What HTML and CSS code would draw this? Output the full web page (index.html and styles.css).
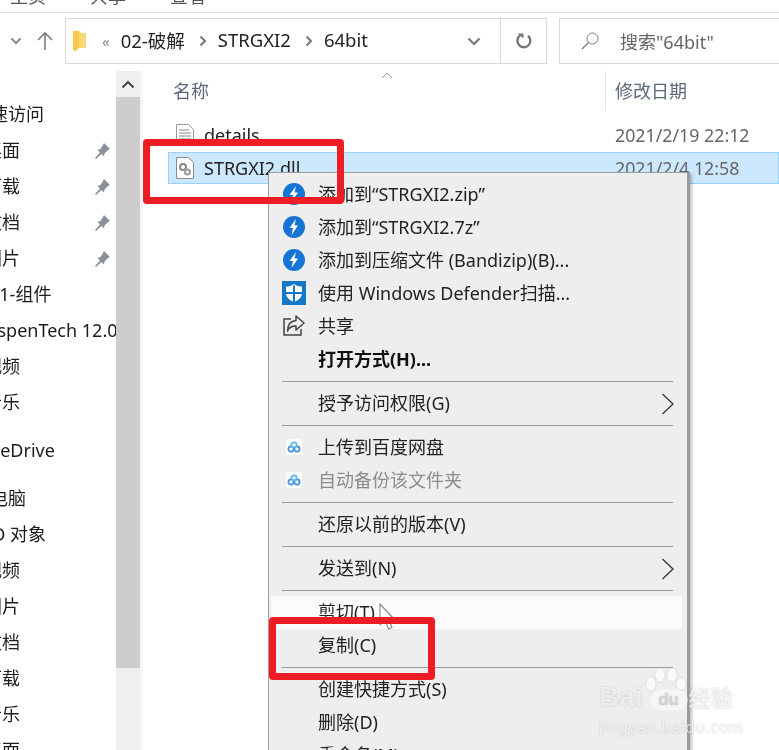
FILE: index.html
```html
<!DOCTYPE html>
<html lang="zh-CN">
<head>
<meta charset="utf-8">
<title>64bit</title>
<link rel="stylesheet" href="styles.css">
</head>
<body>
<div class="window">
  <div class="ribbon"><span>主页</span><span>共享</span><span>查看</span></div>
  <div class="toolbar">
    <svg class="nav-down" width="12" height="8" viewBox="0 0 12 8"><path d="M1.5 1.5 6 6l4.500-4.500" fill="none" stroke="#8a8a8a" stroke-width="2"/></svg>
    <svg class="nav-up" width="18" height="20" viewBox="0 0 18 20"><path d="M9 19V2M2 9l7-7 7 7" fill="none" stroke="#7f7f7f" stroke-width="1.600"/></svg>
    <div class="address">
      <svg class="folder" width="16" height="22" viewBox="0 0 16 22"><path d="M1 1h7l1 2h5v15H6l-2 3-3-1z" fill="#f8d775"/><path d="M1 1h6v17l-3 3-3-1z" fill="#f5c94f"/></svg>
      <span class="crumb-more">«</span>
      <span class="crumb">02-破解</span>
      <svg class="sep" width="8" height="12" viewBox="0 0 8 12"><path d="M1.500 1.500 6 6l-4.500 4.500" fill="none" stroke="#777" stroke-width="2"/></svg>
      <span class="crumb">STRGXI2</span>
      <svg class="sep" width="8" height="12" viewBox="0 0 8 12"><path d="M1.500 1.500 6 6l-4.500 4.500" fill="none" stroke="#777" stroke-width="2"/></svg>
      <span class="crumb">64bit</span>
      <svg class="addr-down" width="14" height="9" viewBox="0 0 14 9"><path d="M1.500 1.500 7 7l5.500-5.500" fill="none" stroke="#777" stroke-width="2.200"/></svg>
      <div class="refresh">
        <svg width="18" height="18" viewBox="0 0 18 18"><path d="M5 3.500a6.500 6.500 0 1 0 8 .2" fill="none" stroke="#777" stroke-width="2.400"/><path d="M2.500 1.500h6v5z" fill="#777"/></svg>
      </div>
    </div>
    <div class="search">
      <svg width="20" height="20" viewBox="0 0 20 20"><circle cx="12.500" cy="7.500" r="5.500" fill="none" stroke="#777" stroke-width="1"/><path d="M8.500 11.500 2 18" stroke="#777" stroke-width="1.300"/></svg>
      <span>搜索"64bit"</span>
    </div>
  </div>
  <div class="content">
    <nav class="tree">
      <div class="tree-row head">快速访问</div>
      <div class="tree-row child">桌面<svg class="pin"><use href="#pin"/></svg></div>
      <div class="tree-row child">下载<svg class="pin"><use href="#pin"/></svg></div>
      <div class="tree-row child">文档<svg class="pin"><use href="#pin"/></svg></div>
      <div class="tree-row child">图片<svg class="pin"><use href="#pin"/></svg></div>
      <div class="tree-row wide">01-组件</div>
      <div class="tree-row wide2">AspenTech 12.0</div>
      <div class="tree-row child">视频</div>
      <div class="tree-row child gap">音乐</div>
      <div class="tree-row onedrive gap">OneDrive</div>
      <div class="tree-row head">此电脑</div>
      <div class="tree-row wide3">3D 对象</div>
      <div class="tree-row child">视频</div>
      <div class="tree-row child">图片</div>
      <div class="tree-row child">文档</div>
      <div class="tree-row child">下载</div>
      <div class="tree-row child">音乐</div>
      <div class="tree-row child">桌面</div>
    </nav>
    <div class="scrollbar">
      <div class="scroll-btn"><svg width="14" height="9" viewBox="0 0 14 9"><path d="M1.500 7.500 7 2l5.500 5.500" fill="none" stroke="#4a4a4a" stroke-width="2.200"/></svg></div>
      <div class="scroll-thumb"></div>
    </div>
    <main class="files">
      <div class="columns">
        <svg class="sort" width="12" height="7" viewBox="0 0 12 7"><path d="M1 6l5-5 5 5" fill="none" stroke="#999" stroke-width="1"/></svg>
        <div class="col-name">名称</div>
        <div class="col-date">修改日期</div>
      </div>
      <div class="file">
        <svg class="file-icon" width="18" height="22" viewBox="0 0 18 22"><path d="M.5.500h12l5 5v16H.500z" fill="#fff" stroke="#9a9a9a"/><path d="M3 6h10M3 9h12M3 12h12M3 15h12M3 18h12" stroke="#888"/></svg>
        <span class="file-name">details</span>
        <span class="file-date">2021/2/19 22:12</span>
      </div>
      <div class="file selected">
        <svg class="file-icon" width="18" height="22" viewBox="0 0 18 22"><path d="M.5.500h12l5 5v16H.500z" fill="#fff" stroke="#8a8a8a"/><circle cx="7" cy="10" r="3" fill="none" stroke="#888" stroke-width="2"/><circle cx="11.500" cy="15" r="2.500" fill="none" stroke="#999" stroke-width="2"/></svg>
        <span class="file-name">STRGXI2.dll</span>
        <span class="file-date">2021/2/4 12:58</span>
      </div>
    </main>
  </div>

  <div class="menu">
    <div class="item"><svg class="ic"><use href="#bz"/></svg>添加到“STRGXI2.zip”</div>
    <div class="item"><svg class="ic"><use href="#bz"/></svg>添加到“STRGXI2.7z”</div>
    <div class="item"><svg class="ic"><use href="#bz"/></svg>添加到压缩文件 (Bandizip)(B)...</div>
    <div class="item"><svg class="ic" viewBox="0 0 24 24"><rect width="24" height="24" fill="#1477c9"/><path d="M12 3c3 2 5 2.500 8 2.500V12c0 4.500-3.500 7-8 9-4.500-2-8-4.500-8-9V5.500C7 5.500 9 5 12 3z" fill="#fff"/><path d="M11 4.500h2V11h7v2h-7v8h-2v-8H4v-2h7z" fill="#1477c9"/></svg>使用 Windows Defender扫描...</div>
    <div class="item"><svg class="ic" viewBox="0 0 24 24"><path d="M9 5H2v16h17v-6" fill="none" stroke="#444" stroke-width="1.500"/><path d="M14 2l8 7-8 7v-4C10 12 7 13 5.500 17c0-6 3-10 8.500-10.500z" fill="#eee" stroke="#444" stroke-width="1.500" stroke-linejoin="round"/></svg>共享</div>
    <div class="item strong">打开方式(H)...</div>
    <div class="rule"></div>
    <div class="item">授予访问权限(G)<svg class="more"><use href="#more"/></svg></div>
    <div class="rule"></div>
    <div class="item"><svg class="ic-sm"><use href="#cloud"/></svg>上传到百度网盘</div>
    <div class="item disabled"><svg class="ic-sm"><use href="#cloud"/></svg>自动备份该文件夹</div>
    <div class="rule"></div>
    <div class="item no-ic">还原以前的版本(V)</div>
    <div class="rule"></div>
    <div class="item">发送到(N)<svg class="more"><use href="#more"/></svg></div>
    <div class="rule"></div>
    <div class="item lit">剪切(T)</div>
    <div class="item">复制(C)</div>
    <div class="rule"></div>
    <div class="item">创建快捷方式(S)</div>
    <div class="item">删除(D)</div>
    <div class="item">重命名(M)</div>
  </div>

  <svg class="cursor" width="16" height="28" viewBox="0 0 16 28"><path d="M1 1v21l5-5 3.500 9 3.500-1.500L9.500 16H15z" fill="none" stroke="#8a8a8a" stroke-width="1.100" stroke-linejoin="round"/></svg>
  <div class="mark mark-a"></div>
  <div class="mark mark-b"></div>

  <div class="baidu">
    <svg class="bd-paw" width="44" height="34" viewBox="0 0 44 34"><g fill="#fff" fill-opacity=".7" stroke="#000" stroke-opacity=".08"><ellipse cx="7" cy="16" rx="5" ry="7"/><ellipse cx="16" cy="7" rx="5" ry="7"/><ellipse cx="28" cy="7" rx="5" ry="7"/><ellipse cx="37" cy="16" rx="5" ry="6"/></g></svg>
    <div class="bd-row"><span class="bd-bai">Bai</span><span class="bd-du">du</span><span class="bd-cn">经验</span></div>
    <div class="bd-url">jingyan.baidu.com</div>
  </div>
</div>

<svg class="defs" width="0" height="0">
  <defs>
    <symbol id="pin" viewBox="0 0 16 16"><path d="M10 0l6 6-2 1-3.500 3.500-.5 3L7.500 11 2 16l-1-1 5-5.500L3.500 7l3-1L9 2z" fill="#8a9097"/></symbol>
    <symbol id="bz" viewBox="0 0 24 24"><circle cx="12" cy="12" r="11" fill="#1574d4"/><path d="M14 4l-6.500 9H11l-1.500 7 6.500-9.500h-3.500z" fill="#fff"/></symbol>
    <symbol id="cloud" viewBox="0 0 24 24"><rect width="24" height="24" rx="4" fill="#fbfbfb"/><g fill="none" stroke-width="2.400"><circle cx="7.500" cy="15" r="4" stroke="#3a8de0"/><circle cx="16.500" cy="15" r="4" stroke="#3a8de0"/><circle cx="12" cy="9" r="4" stroke="#5cb8ea"/></g></symbol>
    <symbol id="more" viewBox="0 0 14 22"><path d="M1.500 1 12 11 1.500 21" fill="none" stroke="#333" stroke-width="1.300"/></symbol>
  </defs>
</svg>
</body>
</html>
```

FILE: styles.css
```css
* { box-sizing: border-box; }
html, body { margin: 0; padding: 0; height: 100%; overflow: hidden; background: #fff; }
body { font-family: "Noto Sans", "Noto Sans CJK SC", sans-serif; font-size: 18px; color: #1c1c1c; }
.defs { position: absolute; }
.window { position: relative; width: 779px; height: 750px; overflow: hidden; display: flex; flex-direction: column; filter: blur(.4px); }

.ribbon { height: 13px; flex: none; overflow: hidden; border-bottom: 1px solid #dedede; display: flex; gap: 44px; padding-left: 10px; line-height: 18px; color: #555; }
.ribbon span { margin-top: -13px; width: 36px; }

.toolbar { height: 58px; flex: none; display: flex; align-items: flex-start; padding-top: 5px; position: relative; }
.nav-down { margin: 19px 0 0 10px; flex: none; }
.nav-up { margin: 13px 0 0 14px; flex: none; }
.address { margin-left: 11px; width: 482px; height: 46px; border: 1px solid #d9d9d9; display: flex; align-items: center; flex: none; }
.folder { margin-left: 6px; flex: none; }
.crumb-more { margin-left: 14px; color: #888; font-size: 15px; }
.crumb { font-size: 18.500px; color: #222; margin-left: 11px; white-space: nowrap; padding-bottom: 3px; }
.sep { margin-left: 14px; flex: none; }
.addr-down { margin-left: auto; margin-right: 19px; flex: none; }
.refresh { width: 46px; height: 100%; border-left: 1px solid #d9d9d9; display: flex; align-items: center; justify-content: center; flex: none; }
.search { margin-left: 12px; flex: 1; height: 46px; border: 1px solid #d9d9d9; border-right: 0; display: flex; align-items: center; padding-left: 20px; gap: 20px; color: #666; }

.content { flex: 1; display: flex; min-height: 0; }
.tree { width: 116px; flex: none; overflow: hidden; padding-top: 25px; }
.tree-row { height: 36px; line-height: 36px; white-space: nowrap; position: relative; }
.tree-row.head { margin-left: -28px; }
.tree-row.child { margin-left: -16px; }
.tree-row.wide { margin-left: -11px; }
.tree-row.wide2 { margin-left: -14px; }
.tree-row.wide3 { margin-left: -18px; }
.tree-row.onedrive { margin-left: -25px; }
.tree-row.gap { margin-bottom: 12px; }
.pin { position: absolute; left: 110px; top: 11px; width: 16px; height: 16px; }

.scrollbar { width: 24px; flex: none; background: #efefef; display: flex; flex-direction: column; }
.scroll-btn { height: 26px; flex: none; display: flex; align-items: center; justify-content: center; }
.scroll-thumb { height: 571px; background: #cdcdcd; }

.files { flex: 1; min-width: 0; border-left: 3px solid #f6f6f6; position: relative; }
.columns { height: 47px; position: relative; color: #5b6878; }
.sort { position: absolute; left: 238px; top: 1px; }
.col-name { position: absolute; left: 30px; top: 6px; }
.col-date { position: absolute; left: 462px; top: 0; height: 40px; padding: 6px 0 0 9px; border-left: 1px solid #e4e6e8; white-space: nowrap; }
.file { height: 34px; display: flex; align-items: center; margin-left: 25px; padding-left: 8px; position: relative; }
.file-icon { flex: none; }
.file-name { margin-left: 10px; color: #222; }
.file-date { position: absolute; left: 447px; color: #666; white-space: nowrap; padding-bottom: 1px; font-size: 17.800px; }
.file.selected { background: #cce8ff; border: 1px solid #99d1ff; padding-left: 7px; height: 32px; }
.file.selected .file-date { left: 446px; }

.menu { position: absolute; left: 268px; top: 172px; width: 422px; padding: 5px 5px 0 2px; background: #eeeeee; border: 1px solid #a0a0a0; border-right: 3px solid #9b9b9b; box-shadow: 2px 2px 3px rgba(0,0,0,.25); }
.item { height: 33px; display: flex; align-items: center; padding: 0 0 3px 47px; position: relative; white-space: nowrap; color: #222; font-size: 18px; }
.item.strong { font-weight: 700; color: #111; }
.item.disabled { color: #8c8c8c; }
.item.lit { background: #fbfbfb; }
.ic { position: absolute; left: 11px; top: 4px; width: 24px; height: 24px; }
.ic-sm { position: absolute; left: 15px; top: 8px; width: 16px; height: 16px; }
.more { position: absolute; left: 390px; top: 6px; width: 14px; height: 22px; }
.rule { height: 11px; position: relative; }
.rule::after { content: ""; position: absolute; left: 11px; right: 9px; top: 5px; height: 1px; background: #9a9a9a; }

.cursor { position: absolute; left: 379px; top: 603px; }
.mark { position: absolute; border: 7px solid #ee1c25; border-radius: 4px; }
.mark-a { left: 143px; top: 139px; width: 201px; height: 65px; }
.mark-b { left: 269px; top: 617px; width: 166px; height: 63px; }

.baidu { position: absolute; left: 597px; top: 665px; width: 142px; height: 72px; color: rgba(255,255,255,.7); text-shadow: 0 0 2px rgba(0,0,0,.22); }
.bd-row { position: absolute; left: 2px; top: 17px; display: flex; align-items: center; white-space: nowrap; line-height: 30px; }
.bd-bai { font-family: "Liberation Sans", sans-serif; font-size: 28px; font-weight: 700; }
.bd-du { font-family: "Liberation Sans", sans-serif; font-size: 17px; font-weight: 700; margin: 5px 1px 0 7px; width: 38px; height: 20px; line-height: 19px; text-align: center; border-radius: 10px; background: rgba(255,255,255,.45); color: #d4d4d4; }
.bd-cn { font-size: 22px; font-weight: 700; }
.bd-paw { position: absolute; left: 47px; top: 3px; }
.bd-url { position: absolute; left: 2px; top: 52px; font-size: 15.500px; line-height: 20px; letter-spacing: .6px; white-space: nowrap; }
```
